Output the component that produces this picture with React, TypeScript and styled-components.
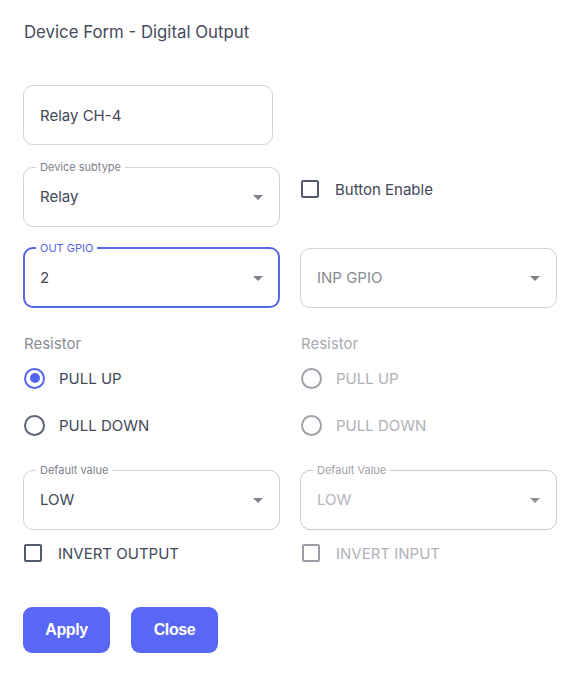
import React from "react";
import styled, { createGlobalStyle, css } from "styled-components";

const Global = createGlobalStyle`
  html, body { margin: 0; padding: 0; background: #ffffff; }
  body { font-family: Inter, "Noto Sans", sans-serif; color: #424858; }
  * { box-sizing: border-box; }
`;

const Page = styled.div`
  width: 584px;
  padding: 22px 27px 0 23px;
  display: flex;
  flex-direction: column;
`;

const Title = styled.h1`
  margin: 0 0 0 1px;
  font-size: 16.8px;
  line-height: 20px;
  font-weight: 400;
  color: #454b5e;
`;

const NameBox = styled.div`
  margin-top: 43px;
  width: 250px;
  height: 60px;
  border: 1px solid #cfd2d6;
  border-radius: 10px;
  padding-left: 16px;
  display: flex;
  align-items: center;
  font-size: 15px;
  color: #424858;
`;

const Grid = styled.div<{ $mt: number }>`
  margin-top: ${(p) => p.$mt}px;
  display: grid;
  grid-template-columns: 257px 257px;
  column-gap: 20px;
  align-items: start;
`;

const Field = styled.fieldset<{ $focused?: boolean; $disabled?: boolean }>`
  margin: 0;
  min-width: 0;
  padding: 0 9px 6px 16px;
  border: 1px solid #cfd2d6;
  border-radius: 10px;
  ${(p) =>
    p.$focused &&
    css`
      border: 2px solid #5766e6;
      padding-left: 15px;
      padding-right: 8px;
      padding-bottom: 5px;
    `}
  ${(p) =>
    p.$disabled &&
    css`
      border-color: #c9cbcf;
    `}
`;

const Legend = styled.legend<{ $focused?: boolean; $disabled?: boolean; $empty?: boolean }>`
  margin-left: -4px;
  padding: 0 4px;
  font-size: 11px;
  line-height: 12px;
  height: 12px;
  color: ${(p) => (p.$focused ? "#5766e6" : p.$disabled ? "#9ea2a9" : "#7c818b")};
  ${(p) =>
    p.$empty &&
    css`
      padding: 0;
      width: 0;
    `}
`;

const SelectRow = styled.div`
  height: 47px;
  display: flex;
  align-items: center;
  justify-content: space-between;
`;

const Value = styled.span<{ $tone?: "normal" | "placeholder" | "disabled" }>`
  font-size: 15px;
  color: ${(p) =>
    p.$tone === "placeholder" ? "#878b93" : p.$tone === "disabled" ? "#b3b6bc" : "#424858"};
`;

const Arrow = styled.svg<{ $disabled?: boolean }>`
  width: 24px;
  height: 24px;
  fill: ${(p) => (p.$disabled ? "#8e929a" : "#7d8189")};
  flex: none;
`;

const CheckRow = styled.label<{ $pt?: number; $disabled?: boolean }>`
  display: flex;
  align-items: center;
  gap: 16px;
  padding-top: ${(p) => p.$pt ?? 0}px;
  padding-left: ${(p) => (p.$disabled ? 2 : 1)}px;
  height: ${(p) => 24 + (p.$pt ?? 0)}px;
  font-size: 15px;
  color: ${(p) => (p.$disabled ? "#b0b3b9" : "#424858")};
`;

const Box = styled.span<{ $disabled?: boolean }>`
  width: 18px;
  height: 18px;
  border: 2px solid ${(p) => (p.$disabled ? "#9a9ea7" : "#535a6b")};
  border-radius: 2px;
  flex: none;
`;

const SectionLabel = styled.div<{ $disabled?: boolean }>`
  margin-top: 26px;
  margin-left: 1px;
  font-size: 15px;
  line-height: 20px;
  color: ${(p) => (p.$disabled ? "#a6aab1" : "#878c95")};
`;

const RadioList = styled.div`
  margin-top: 4px;
  display: flex;
  flex-direction: column;
  gap: 7px;
`;

const RadioRow = styled.label<{ $disabled?: boolean }>`
  height: 40px;
  display: flex;
  align-items: center;
  gap: 14px;
  padding-left: 1px;
  font-size: 15px;
  color: ${(p) => (p.$disabled ? "#aeb1b7" : "#424858")};
`;

const Circle = styled.span<{ $checked?: boolean; $disabled?: boolean }>`
  width: 21px;
  height: 21px;
  border-radius: 50%;
  border: 2px solid
    ${(p) => (p.$checked ? "#5364f0" : p.$disabled ? "#9da1a9" : "#5b6272")};
  display: flex;
  align-items: center;
  justify-content: center;
  flex: none;
  &::after {
    content: "";
    width: 10px;
    height: 10px;
    border-radius: 50%;
    background: ${(p) => (p.$checked ? "#5364f0" : "transparent")};
  }
`;

const Buttons = styled.div`
  margin-top: 42px;
  display: flex;
  gap: 21px;
`;

const Button = styled.button`
  width: 87px;
  height: 46px;
  border: none;
  border-radius: 9px;
  background: #5867f5;
  color: #ffffff;
  font-family: "Liberation Sans", Arial, sans-serif;
  font-weight: 700;
  font-size: 16px;
  letter-spacing: -0.4px;
  padding: 0;
`;

const Column = styled.div``;

const Caret = ({ disabled }: { disabled?: boolean }) => (
  <Arrow viewBox="0 0 24 24" $disabled={disabled}>
    <path d="M7 10l5 5 5-5z" />
  </Arrow>
);

type SelectProps = {
  label?: string;
  value: string;
  focused?: boolean;
  disabled?: boolean;
  placeholder?: boolean;
};

const Select = ({ label, value, focused, disabled, placeholder }: SelectProps) => (
  <Field $focused={focused} $disabled={disabled}>
    <Legend $focused={focused} $disabled={disabled} $empty={!label}>
      {label}
    </Legend>
    <SelectRow>
      <Value $tone={disabled ? "disabled" : placeholder ? "placeholder" : "normal"}>{value}</Value>
      <Caret disabled={disabled} />
    </SelectRow>
  </Field>
);

const Resistor = ({ disabled, selected }: { disabled?: boolean; selected?: string }) => (
  <Column>
    <SectionLabel $disabled={disabled}>Resistor</SectionLabel>
    <RadioList>
      {["PULL UP", "PULL DOWN"].map((o) => (
        <RadioRow key={o} $disabled={disabled}>
          <Circle $checked={selected === o} $disabled={disabled} />
          {o}
        </RadioRow>
      ))}
    </RadioList>
  </Column>
);

export default function App() {
  return (
    <Page>
      <Global />
      <Title>Device Form - Digital Output</Title>
      <NameBox>Relay CH-4</NameBox>
      <Grid $mt={16}>
        <Select label="Device subtype" value="Relay" />
        <CheckRow $pt={16}>
          <Box />
          Button Enable
        </CheckRow>
      </Grid>
      <Grid $mt={15}>
        <Select label="OUT GPIO" value="2" focused />
        <Select value="INP GPIO" placeholder />
      </Grid>
      <Grid $mt={0}>
        <Resistor selected="PULL UP" />
        <Resistor disabled />
      </Grid>
      <Grid $mt={19}>
        <Select label="Default value" value="LOW" />
        <Select label="Default Value" value="LOW" disabled />
      </Grid>
      <Grid $mt={11}>
        <CheckRow>
          <Box />
          INVERT OUTPUT
        </CheckRow>
        <CheckRow $disabled>
          <Box $disabled />
          INVERT INPUT
        </CheckRow>
      </Grid>
      <Buttons>
        <Button>Apply</Button>
        <Button>Close</Button>
      </Buttons>
    </Page>
  );
}
